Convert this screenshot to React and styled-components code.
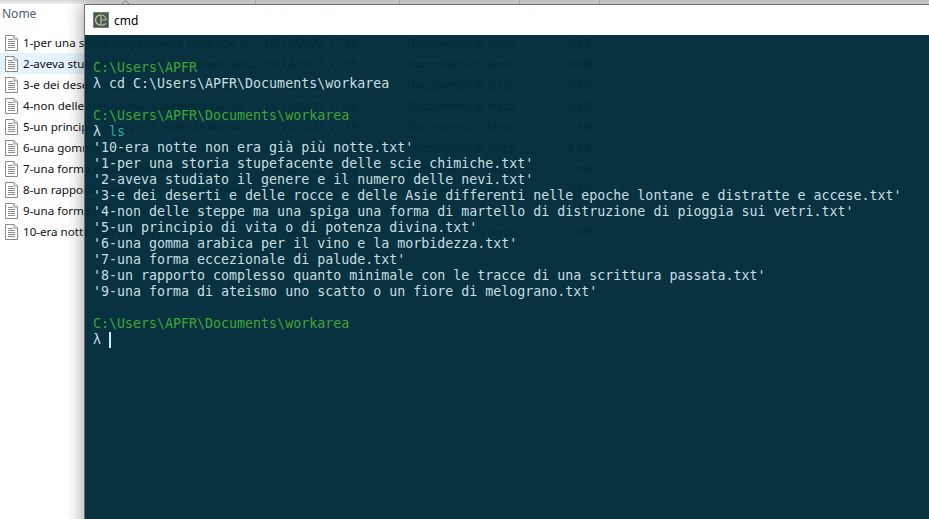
import React from "react";
import styled, { createGlobalStyle } from "styled-components";

const files = [
  "1-per una storia stupefacente delle scie c...",
  "2-aveva studiato il genere e il numero del...",
  "3-e dei deserti e delle rocce e delle Asie ...",
  "4-non delle steppe ma una spiga una for...",
  "5-un principio di vita o di potenza divina...",
  "6-una gomma arabica per il vino e la morbi...",
  "7-una forma eccezionale di palude.txt",
  "8-un rapporto complesso quanto minim...",
  "9-una forma di ateismo uno scatto o un ...",
  "10-era notte non era già più notte.txt",
];

const listing = [
  "'10-era notte non era già più notte.txt'",
  "'1-per una storia stupefacente delle scie chimiche.txt'",
  "'2-aveva studiato il genere e il numero delle nevi.txt'",
  "'3-e dei deserti e delle rocce e delle Asie differenti nelle epoche lontane e distratte e accese.txt'",
  "'4-non delle steppe ma una spiga una forma di martello di distruzione di pioggia sui vetri.txt'",
  "'5-un principio di vita o di potenza divina.txt'",
  "'6-una gomma arabica per il vino e la morbidezza.txt'",
  "'7-una forma eccezionale di palude.txt'",
  "'8-un rapporto complesso quanto minimale con le tracce di una scrittura passata.txt'",
  "'9-una forma di ateismo uno scatto o un fiore di melograno.txt'",
];

const Global = createGlobalStyle`
  html, body { margin: 0; height: 100%; background: #fff; overflow: hidden; }
`;

const Desktop = styled.div`
  position: relative;
  width: 929px;
  height: 519px;
  overflow: hidden;
  background: #fff;
  font-family: "Noto Sans", sans-serif;
`;

const ColumnBar = styled.div`
  display: grid;
  grid-template-columns: 256px 144px 120px 80px 1fr;
  height: 4px;
  background: linear-gradient(#d8d8d8, #f0f0f0);
`;

const ColumnEdge = styled.div`
  position: relative;
  border-right: 1px solid #c4c4c4;
`;

const SortArrow = styled.svg`
  position: absolute;
  left: 121px;
  top: 0;
`;

const Headers = styled.div`
  display: grid;
  grid-template-columns: 256px 144px 120px 80px;
  height: 28px;
  padding-top: 2px;
  box-sizing: border-box;
  align-items: start;
  font-size: 12px;
  line-height: 16px;
  color: #4c607a;
`;

const HeaderCell = styled.div`
  padding-left: ${(p) => (p.$first ? "2px" : "7px")};
`;

const List = styled.div`
  display: flex;
  flex-direction: column;
`;

const Row = styled.div`
  display: grid;
  grid-template-columns: 256px 144px 120px 80px;
  height: 21px;
  align-items: center;
  font-size: 11.6px;
  line-height: 16px;
  color: #111;
  background: ${(p) => (p.$hover ? "#e5f3ff" : "transparent")};
`;

const NameCell = styled.div`
  display: flex;
  align-items: center;
  gap: 5px;
  padding-left: 5px;
  white-space: nowrap;

  svg {
    flex: none;
  }
`;

const DimCell = styled.div`
  padding: 0 ${(p) => (p.$right ? "8px" : "0")} 0 ${(p) => (p.$right ? "0" : "7px")};
  text-align: ${(p) => (p.$right ? "right" : "left")};
  color: #222;
  white-space: nowrap;
`;

const Window = styled.div`
  position: absolute;
  left: 84px;
  top: 4px;
  width: 860px;
  height: 530px;
  display: flex;
  flex-direction: column;
  border: 1px solid #6e6e6e;
  box-shadow: -2px 0 16px rgba(0, 0, 0, 0.35);
`;

const TitleBar = styled.div`
  height: 30px;
  display: flex;
  align-items: center;
  gap: 5px;
  padding-left: 8px;
  background: rgba(255, 255, 255, 0.985);
  font-size: 12px;
  color: #000;
`;

const Terminal = styled.div`
  flex: 1;
  padding: 25px 8px 0;
  background: rgba(0, 43, 57, 0.97);
  font-family: "DejaVu Sans Mono", monospace;
  font-size: 13.3px;
  line-height: 16px;
  color: #c9dfe2;
  white-space: pre;
`;

const Line = styled.div`
  height: 16px;
  color: ${(p) => p.$color || "inherit"};
`;

const Command = styled.span`
  color: #35a5a5;
`;

const Caret = styled.span`
  display: inline-block;
  width: 2px;
  height: 16px;
  vertical-align: top;
  background: #c8eef5;
`;

const FileIcon = () => (
  <svg width="13" height="16" viewBox="0 0 13 16">
    <path d="M0.5 0.5H9L12.5 4V15.5H0.5Z" fill="#fff" stroke="#8a8a8a" />
    <path d="M9 0.5V4H12.5" fill="#eee" stroke="#8a8a8a" />
    <path d="M3 4.5H8M3 6.5H10M3 8.5H10M3 10.5H10M3 12.5H10" stroke="#8f8f8f" />
  </svg>
);

const CmdIcon = () => (
  <svg width="16" height="16" viewBox="0 0 16 16">
    <rect width="16" height="16" fill="#3d5a62" />
    <rect x="0.5" y="0.5" width="15" height="15" fill="none" stroke="#7d8468" />
    <path d="M7.5 3A5 5 0 0 0 7.5 13" fill="none" stroke="#d0bf7c" strokeWidth="1.4" />
    <path d="M8 2.5V13.5" stroke="#d0bf7c" strokeWidth="1.2" />
    <path d="M8 8H13A5 5 0 0 0 8.5 3M13 11.5A5 5 0 0 1 8.5 13" fill="none" stroke="#d0bf7c" strokeWidth="1.2" />
  </svg>
);

const Prompt = ({ path }) => <Line $color="#3fa535">{path}</Line>;

export default function App() {
  return (
    <Desktop>
      <Global />
      <ColumnBar>
        <ColumnEdge>
          <SortArrow width="9" height="5" viewBox="0 0 9 5">
            <path d="M0.5 4.5L4.5 0.5L8.5 4.5" fill="none" stroke="#8f8f8f" />
          </SortArrow>
        </ColumnEdge>
        <ColumnEdge />
        <ColumnEdge />
        <ColumnEdge />
      </ColumnBar>
      <Headers>
        <HeaderCell $first>Nome</HeaderCell>
        <HeaderCell>Ultima modifica</HeaderCell>
        <HeaderCell>Tipo</HeaderCell>
        <HeaderCell>Dimensione</HeaderCell>
      </Headers>
      <List>
        {files.map((name, i) => (
          <Row key={name} $hover={i === 1}>
            <NameCell>
              <FileIcon />
              <span>{name}</span>
            </NameCell>
            <DimCell>15/12/2023 17:38</DimCell>
            <DimCell>Documento di testo</DimCell>
            <DimCell $right>0 KB</DimCell>
          </Row>
        ))}
      </List>
      <Window>
        <TitleBar>
          <CmdIcon />
          cmd
        </TitleBar>
        <Terminal>
          <Prompt path="C:\Users\APFR" />
          <Line>λ cd C:\Users\APFR\Documents\workarea</Line>
          <Line />
          <Prompt path="C:\Users\APFR\Documents\workarea" />
          <Line>
            λ <Command>ls</Command>
          </Line>
          {listing.map((l) => (
            <Line key={l}>{l}</Line>
          ))}
          <Line />
          <Prompt path="C:\Users\APFR\Documents\workarea" />
          <Line>
            λ <Caret />
          </Line>
        </Terminal>
      </Window>
    </Desktop>
  );
}
